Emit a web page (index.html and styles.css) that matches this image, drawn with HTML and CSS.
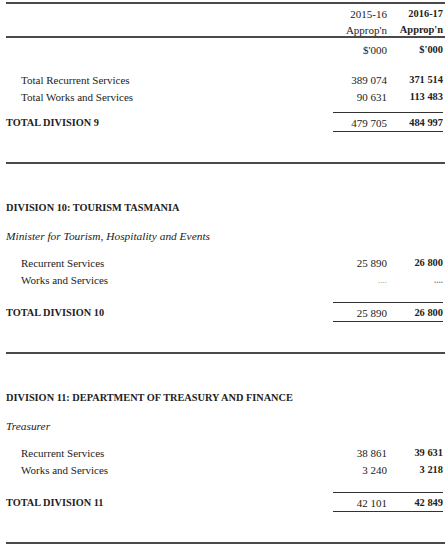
FILE: index.html
```html
<!DOCTYPE html>
<html>
<head>
<meta charset="utf-8">
<link rel="stylesheet" href="styles.css">
</head>
<body>
<div class="page">
  <div class="topline"></div>
  <div class="head">
    <div class="row yr"><span></span><span class="n">2015-16</span><span class="n b">2016-17</span></div>
    <div class="row ap"><span></span><span class="n">Approp'n</span><span class="n b">Approp'n</span></div>
    <div class="row unit"><span></span><span class="n">$'000</span><span class="n b">$'000</span></div>
  </div>

  <section class="division first">
    <div class="items">
      <div class="row item"><span class="lbl">Total Recurrent Services</span><span class="n">389 074</span><span class="n b">371 514</span></div>
      <div class="row item"><span class="lbl">Total Works and Services</span><span class="n">90 631</span><span class="n b">113 483</span></div>
    </div>
    <div class="row total"><span class="tl">TOTAL DIVISION 9</span><span class="n">479 705</span><span class="n b">484 997</span></div>
  </section>
  <div class="rule"></div>

  <section class="division">
    <h2 class="dtitle">DIVISION 10: TOURISM TASMANIA</h2>
    <p class="minister">Minister for Tourism, Hospitality and Events</p>
    <div class="items">
      <div class="row item"><span class="lbl">Recurrent Services</span><span class="n">25 890</span><span class="n b">26 800</span></div>
      <div class="row item"><span class="lbl">Works and Services</span><span class="n dots">....</span><span class="n b dots">....</span></div>
    </div>
    <div class="row total"><span class="tl">TOTAL DIVISION 10</span><span class="n">25 890</span><span class="n b">26 800</span></div>
  </section>
  <div class="rule"></div>

  <section class="division">
    <h2 class="dtitle">DIVISION 11: DEPARTMENT OF TREASURY AND FINANCE</h2>
    <p class="minister">Treasurer</p>
    <div class="items">
      <div class="row item"><span class="lbl">Recurrent Services</span><span class="n">38 861</span><span class="n b">39 631</span></div>
      <div class="row item"><span class="lbl">Works and Services</span><span class="n">3 240</span><span class="n b">3 218</span></div>
    </div>
    <div class="row total"><span class="tl">TOTAL DIVISION 11</span><span class="n">42 101</span><span class="n b">42 849</span></div>
  </section>
  <div class="rule"></div>
</div>
</body>
</html>
```
FILE: styles.css
```css
html, body {
  margin: 0;
  padding: 0;
  background: #fff;
}
.page {
  width: 445px;
  padding: 2px 2px 0 6px;
  box-sizing: border-box;
  font-family: "Liberation Serif", "Times New Roman", serif;
  font-size: 11px;
  color: #222;
}
.topline {
  height: 0;
  border-top: 2px solid #4a4a4a;
  margin-right: -2px;
}
.row {
  display: grid;
  grid-template-columns: 1fr 54px 56px;
  align-items: center;
  line-height: 14px;
}
.n {
  text-align: right;
}
.b {
  font-weight: bold;
  font-size: 10.4px;
}
.head .yr {
  margin-top: 1px;
  height: 18px;
}
.head .ap {
  height: 12px;
  align-items: end;
  line-height: 12px;
  border-bottom: 2px solid #4a4a4a;
  margin-right: -2px;
  padding-right: 2px;
  padding-top: 1px;
}
.head .unit {
  height: 24px;
}
.division.first {
  padding-top: 9px;
}
.items .item {
  height: 17px;
}
.lbl {
  padding-left: 15px;
}
.items {
  margin-bottom: 7px;
}
.division .minister + .items {
  margin-top: 11px;
  margin-bottom: 14px;
}
.total {
  align-items: start;
}
.total .tl {
  font-weight: bold;
  font-size: 10.3px;
  padding-top: 4px;
}
.total .n {
  border-top: 1px solid #333;
  border-bottom: 1px solid #333;
  height: 15px;
  padding-top: 3px;
  line-height: 14px;
  box-sizing: content-box;
}
.rule {
  border-top: 2px solid #4a4a4a;
  margin-top: 30px;
  margin-right: -2px;
}
.dtitle {
  margin: 37px 0 0;
  font-size: 10.3px;
  font-weight: bold;
  height: 14px;
  line-height: 14px;
}
.minister {
  margin: 14px 0 0;
  font-style: italic;
  font-size: 11.4px;
  height: 14px;
  line-height: 14px;
}
.dots {
  color: #888;
  font-size: 9px;
}
```
